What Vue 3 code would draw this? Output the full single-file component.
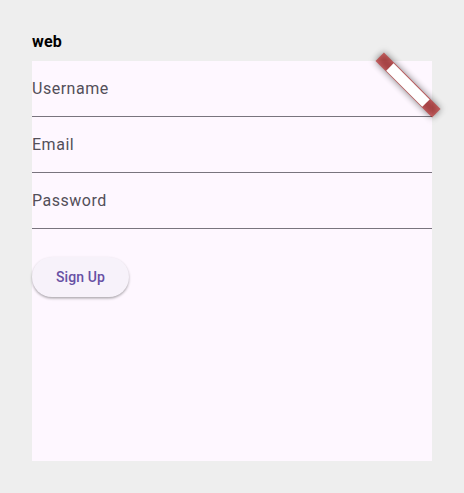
<script setup>
const fields = [
  { name: 'username', label: 'Username' },
  { name: 'email', label: 'Email' },
  { name: 'password', label: 'Password' },
]
</script>

<template>
  <main class="page">
    <h1 class="title">web</h1>
    <section class="screen">
      <div v-for="field in fields" :key="field.name" class="field">
        <span class="label">{{ field.label }}</span>
      </div>
      <button class="submit" type="button">Sign Up</button>
      <svg class="banner" viewBox="0 0 96 96" aria-hidden="true">
        <defs>
          <filter id="banner-shadow" x="-70" y="-70" width="140" height="140" filterUnits="userSpaceOnUse">
            <feGaussianBlur stdDeviation="3.96" />
          </filter>
        </defs>
        <g transform="translate(48 48) rotate(45)">
          <rect x="-40" y="-6" width="80" height="12" fill="#000" fill-opacity="0.498" filter="url(#banner-shadow)" />
          <rect x="-40" y="-6" width="80" height="12" fill="#b71c1c" fill-opacity="0.627" />
          <rect x="-25.5" y="-5.1" width="51" height="10.4" fill="#fff" />
        </g>
      </svg>
    </section>
  </main>
</template>

<style>
body {
  background: #eeeeee;
}
</style>

<style scoped>
.page {
  box-sizing: border-box;
  height: 493px;
  padding: 32px;
  background: #eeeeee;
  font-family: Roboto, sans-serif;
}

.title {
  height: 19px;
  margin: 0 0 10px;
  color: #000;
  font-size: 16px;
  font-weight: 700;
  line-height: 19px;
  letter-spacing: 0.15px;
}

.screen {
  position: relative;
  width: 400px;
  height: 400px;
  background: #fef7ff;
}

.field {
  box-sizing: border-box;
  display: flex;
  align-items: center;
  height: 56px;
  border-bottom: 1px solid #79747e;
}

.label {
  color: #534f59;
  font-size: 16px;
  line-height: 24px;
  letter-spacing: 0.52px;
}

.submit {
  display: block;
  height: 40px;
  margin-top: 28px;
  padding: 0 24px;
  border: 0;
  border-radius: 20px;
  background: #f7f2fa;
  box-shadow: 0 1.5px 2.5px rgba(0, 0, 0, 0.32);
  color: #6750a4;
  font: 500 14px/20px Roboto, sans-serif;
  letter-spacing: 0.1px;
}

.banner {
  position: absolute;
  top: -24px;
  right: -24px;
  width: 96px;
  height: 96px;
  overflow: visible;
}
</style>
